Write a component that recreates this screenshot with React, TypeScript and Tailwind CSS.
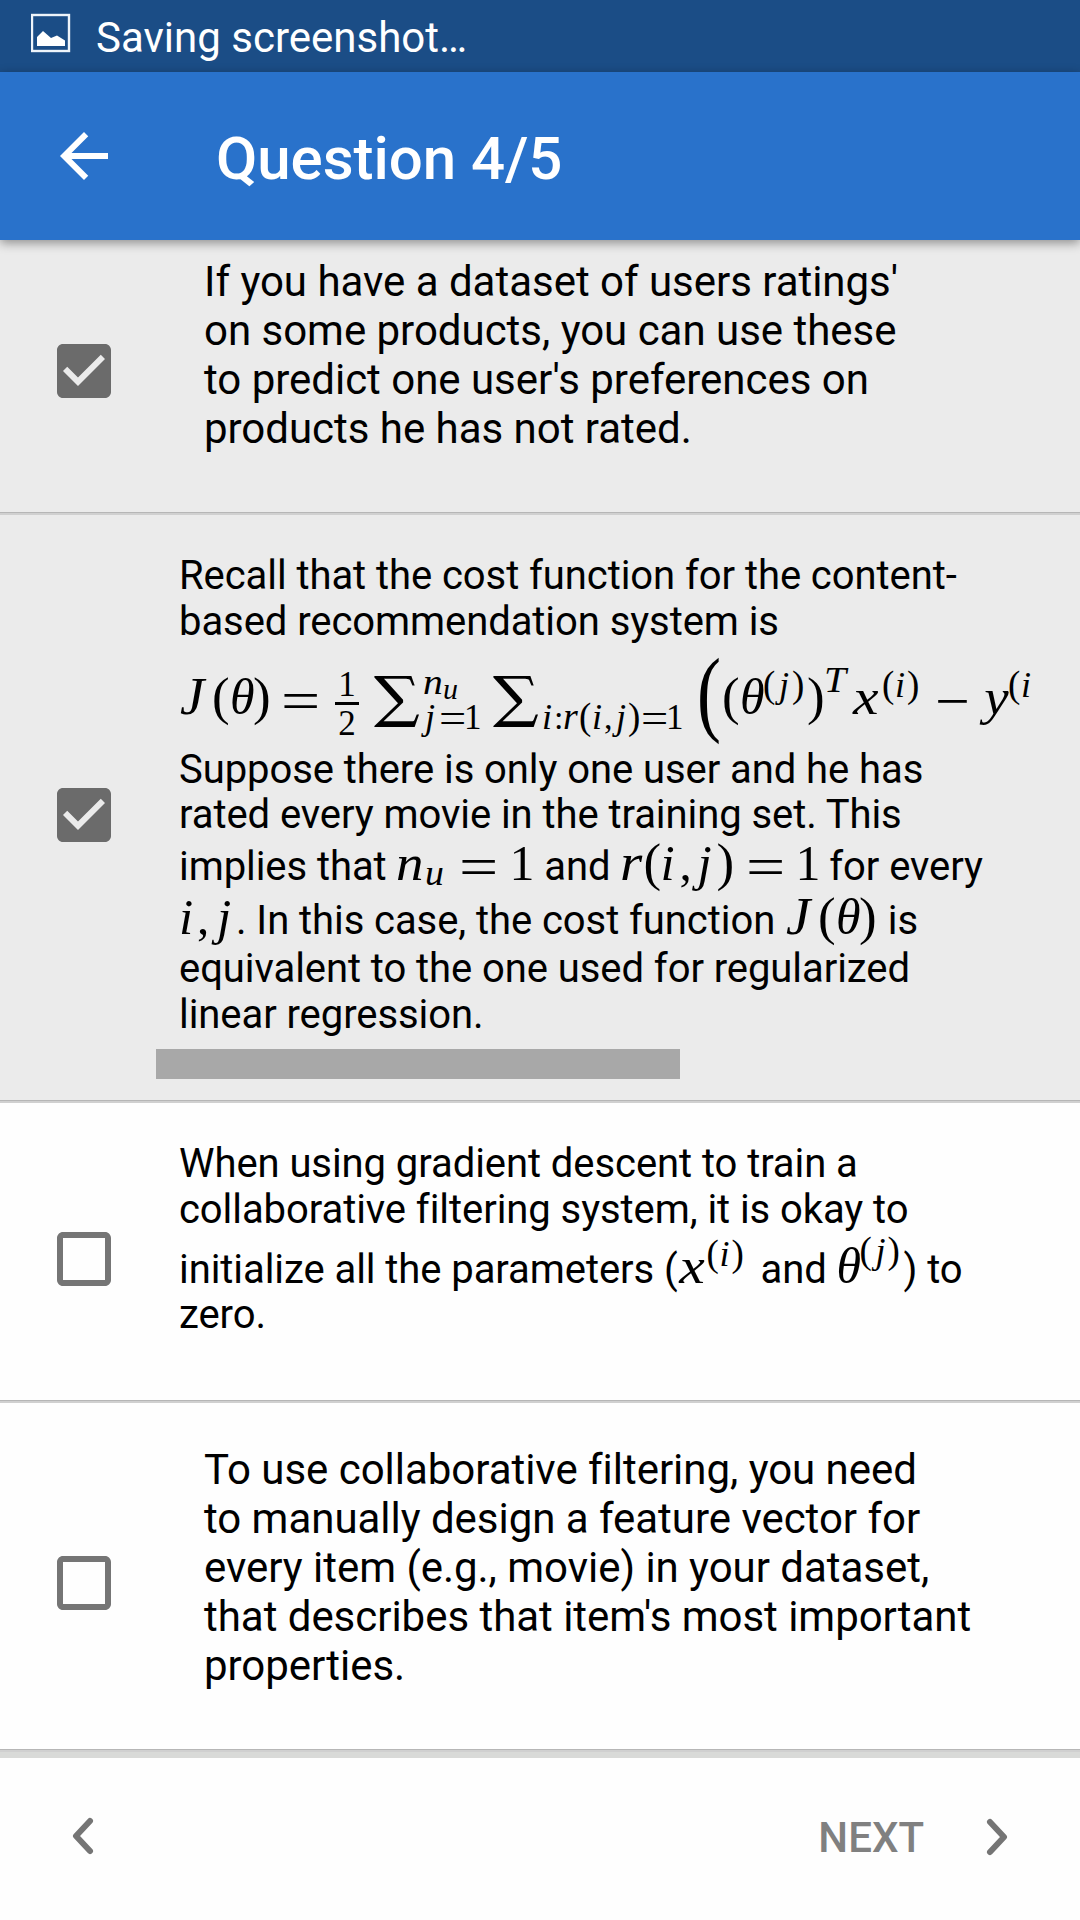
import type { ReactNode } from "react";

const BOX_OUTLINE =
  "M19 5v14H5V5h14m0-2H5c-1.1 0-2 .9-2 2v14c0 1.1.9 2 2 2h14c1.1 0 2-.9 2-2V5c0-1.1-.9-2-2-2z";
const BOX_CHECKED =
  "M19 3H5c-1.11 0-2 .9-2 2v14c0 1.1.89 2 2 2h14c1.11 0 2-.9 2-2V5c0-1.1-.89-2-2-2zm-9 14l-5-5 1.41-1.41L10 14.17l7.59-7.59L19 8l-9 9z";

function Checkbox({ checked, className }: { checked?: boolean; className: string }) {
  return (
    <svg
      viewBox="0 0 24 24"
      className={`ml-12 size-[72px] shrink-0 ${checked ? "fill-[#6b6b6b]" : "fill-[#757575]"} ${className}`}
    >
      <path d={checked ? BOX_CHECKED : BOX_OUTLINE} />
    </svg>
  );
}

function Divider() {
  return <div className="h-[3px] shrink-0 border-t border-[#b6b6b6] bg-[#d0d0d0]" />;
}

function Line({ className = "", children }: { className?: string; children: ReactNode }) {
  return <div className={`h-[46px] whitespace-nowrap leading-[46px] ${className}`}>{children}</div>;
}

/* One math symbol: a box of set width on the text's baseline. */
function M({ c, i, children }: { c: string; i?: boolean; children: ReactNode }) {
  return (
    <span
      className={`inline-block origin-left font-['Liberation_Serif',serif] leading-[0] tracking-normal ${i ? "italic" : ""} ${c}`}
    >
      {children}
    </span>
  );
}

function Sum() {
  return (
    <span className="inline-block w-[50px] origin-left scale-x-[1.12] align-[-1px] font-['DejaVu_Math_TeX_Gyre','Liberation_Serif',serif] text-[49px] leading-[0]">
      ∑
    </span>
  );
}

function CostFormula() {
  return (
    <Line className="mt-[33px]">
      <M i c="w-[33px] pl-px scale-x-105 text-[52px]">J</M>
      <M c="w-[18px] text-[53px]">(</M>
      <M i c="w-[23px] text-[50px]">θ</M>
      <M c="w-[28px] text-[53px]">)</M>
      <M c="w-[54px] scale-x-[1.2] align-[-6px] text-[58px]">=</M>
      <span className="-mt-[11px] inline-flex w-[24px] flex-col items-center align-top font-['Liberation_Serif',serif] text-[35px] leading-[35px]">
        <span>1</span>
        <span className="h-[3px] w-full bg-black" />
        <span className="mt-px">2</span>
      </span>
      <span className="inline-block w-[11px]" />
      <Sum />
      <M i c="ml-[3px] w-[20px] scale-x-110 align-[20px] text-[36px]">n</M>
      <M i c="w-[14px] align-[15px] text-[30px]">u</M>
      <M i c="-ml-[34px] w-[16px] pl-[2px] align-[-15px] text-[36px]">j</M>
      <M c="w-[25px] scale-x-[1.15] align-[-18px] text-[42px]">=</M>
      <M c="w-[25px] align-[-15px] text-[35px]">1</M>
      <Sum />
      <M i c="ml-[3px] w-[12px] align-[-15px] text-[36px]">i</M>
      <M c="w-[9px] align-[-15px] text-[34px]">:</M>
      <M i c="w-[16px] align-[-15px] text-[38px]">r</M>
      <M c="w-[13px] align-[-15px] text-[37px]">(</M>
      <M i c="w-[12px] align-[-15px] text-[36px]">i</M>
      <M c="w-[10px] align-[-15px] text-[34px]">,</M>
      <M i c="w-[14px] pl-[2px] align-[-15px] text-[36px]">j</M>
      <M c="w-[13px] align-[-15px] text-[37px]">)</M>
      <M c="w-[25px] scale-x-[1.15] align-[-18px] text-[42px]">=</M>
      <M c="w-[31px] align-[-15px] text-[35px]">1</M>
      <M c="w-[25px] scale-x-75 align-[-10px] text-[96px]">(</M>
      <M c="w-[18px] text-[53px]">(</M>
      <M i c="w-[23px] text-[50px]">θ</M>
      <M c="w-[14px] align-[17px] text-[37px]">(</M>
      <M i c="w-[15px] pl-[2px] align-[17px] text-[36px]">j</M>
      <M c="w-[15px] align-[17px] text-[37px]">)</M>
      <M c="w-[17px] text-[53px]">)</M>
      <M i c="w-[29px] scale-x-110 align-[22px] text-[36px]">T</M>
      <M i c="w-[29px] scale-x-[1.15] text-[50px]">x</M>
      <M c="w-[13px] align-[17px] text-[37px]">(</M>
      <M i c="w-[12px] align-[17px] text-[36px]">i</M>
      <M c="w-[28px] align-[17px] text-[37px]">)</M>
      <M c="w-[47px] scale-x-110 align-[-6px] text-[56px]">−</M>
      <M i c="w-[26px] scale-x-110 pl-[2px] text-[50px]">y</M>
      <M c="w-[13px] align-[17px] text-[37px]">(</M>
      <M i c="w-[12px] align-[17px] text-[36px]">i</M>
    </Line>
  );
}

export default function App() {
  return (
    <div className="flex h-[1920px] w-[1080px] flex-col overflow-hidden bg-[#fefefe] font-[Roboto,sans-serif] text-black">
      <div className="flex h-[72px] shrink-0 items-center bg-[#1b4d86] text-white">
        <svg viewBox="0 0 40 40" className="ml-[31px] mt-[-6px] size-10">
          <rect x="1" y="2" width="37" height="36" fill="none" stroke="#eef4fa" strokeWidth="2.4" />
          <path d="M6 33v-9l6-6 8 7 6-2.500 8 5v5.500z" fill="#fff" />
        </svg>
        <span className="ml-[25px] mt-[3px] text-[42px] leading-[48px]">Saving screenshot…</span>
      </div>

      <header className="relative z-10 flex h-[168px] shrink-0 items-center bg-[#2972cb] text-white shadow-[0_3px_10px_rgba(0,0,0,0.4)]">
        <svg viewBox="0 0 24 24" className="ml-12 size-[72px] fill-white">
          <path d="M20 11H7.830l5.590-5.590L12 4l-8 8 8 8 1.410-1.410L7.830 13H20v-2z" />
        </svg>
        <h1 className="ml-24 mt-[5px] text-[60px] font-medium leading-[70px] tracking-[-0.05px]">Question 4/5</h1>
      </header>

      <main className="flex shrink-0 flex-col">
        <section className="flex h-[272px] bg-[#ebebeb]">
          <Checkbox checked className="mt-[95px]" />
          <p className="ml-[84px] mt-[17px] whitespace-pre text-[42px] leading-[49px] tracking-[-0.02px]">
            {"If you have a dataset of users ratings'\non some products, you can use these\nto predict one user's preferences on\nproducts he has not rated."}
          </p>
        </section>
        <Divider />

        <section className="flex h-[585px] bg-[#ebebeb]">
          <Checkbox checked className="mt-[264px]" />
          <div className="ml-[36px] pt-[38px]">
            <div className="ml-[23px] h-[485px] text-[40px] tracking-[-0.07px]">
              <Line>Recall that the cost function for the content-</Line>
              <Line>based recommendation system is</Line>
              <CostFormula />
              <Line className="mt-[23px]">Suppose there is only one user and he has</Line>
              <Line className="-mt-px">rated every movie in the training set. This</Line>
              <Line className="mt-[6px]">
                implies that <M i c="w-[29px] scale-x-110 text-[50px]">n</M>
                <M i c="w-[34px] scale-x-105 align-[-5px] text-[36px]">u</M>
                <M c="w-[50px] scale-x-[1.2] align-[-6px] text-[58px]">=</M>
                <M c="w-[25px] text-[50px]">1</M> and{" "}
                <M i c="w-[23px] scale-x-110 text-[52px]">r</M>
                <M c="w-[17px] text-[53px]">(</M>
                <M i c="w-[19px] text-[51px]">i</M>
                <M c="w-[18px] text-[49px]">,</M>
                <M i c="w-[19px] text-[51px]">j</M>
                <M c="w-[30px] text-[53px]">)</M>
                <M c="w-[49px] scale-x-[1.2] align-[-6px] text-[58px]">=</M>
                <M c="w-[24px] text-[50px]">1</M> for every
              </Line>
              <Line className="mt-[8px]">
                <M i c="w-[18px] text-[51px]">i</M>
                <M c="w-[20px] text-[49px]">,</M>
                <M i c="w-[19px] text-[51px]">j</M>. In this case, the cost function{" "}
                <M i c="w-[33px] pl-px scale-x-105 text-[52px]">J</M>
                <M c="w-[18px] text-[53px]">(</M>
                <M i c="w-[23px] text-[50px]">θ</M>
                <M c="w-[19px] text-[53px]">)</M> is
              </Line>
              <Line className="mt-[2px]">equivalent to the one used for regularized</Line>
              <Line>linear regression.</Line>
            </div>
            <div className="mt-[11px] h-[30px] w-[524px] bg-[#a8a8a8]" />
          </div>
        </section>
        <Divider />

        <section className="flex h-[297px]">
          <Checkbox className="mt-[120px]" />
          <div className="ml-[59px] pt-[38px] text-[40px] tracking-[-0.07px]">
            <Line>When using gradient descent to train a</Line>
            <Line>collaborative filtering system, it is okay to</Line>
            <Line className="mt-[14px]">
              initialize all the parameters (<M i c="w-[29px] pl-px scale-x-[1.15] text-[50px]">x</M>
              <M c="w-[13px] align-[17px] text-[37px]">(</M>
              <M i c="w-[12px] align-[17px] text-[36px]">i</M>
              <M c="w-[19px] align-[17px] text-[37px]">)</M> and{" "}
              <M i c="w-[23px] text-[50px]">θ</M>
              <M c="w-[14px] align-[20px] text-[37px]">(</M>
              <M i c="w-[14px] pl-[2px] align-[20px] text-[36px]">j</M>
              <M c="w-[16px] align-[20px] text-[37px]">)</M>) to
            </Line>
            <Line className="-mt-px">zero.</Line>
          </div>
        </section>
        <Divider />

        <section className="flex h-[346px]">
          <Checkbox className="mt-[144px]" />
          <p className="ml-[84px] mt-[42px] whitespace-pre text-[42px] leading-[49px] tracking-[-0.03px]">
            {"To use collaborative filtering, you need\nto manually design a feature vector for\nevery item (e.g., movie) in your dataset,\nthat describes that item's most important\nproperties."}
          </p>
        </section>
        <Divider />
      </main>

      <div className="h-[6px] shrink-0 bg-[#d9dad8]" />

      <footer className="flex h-[162px] shrink-0 items-center text-[#808080]">
        <svg viewBox="0 0 24 40" className="ml-[71px] mt-[-6px] h-10 w-6">
          <path d="M19 5L5 20l14 15" fill="none" stroke="#757575" strokeWidth="6" strokeLinecap="round" strokeLinejoin="round" />
        </svg>
        <span className="ml-auto mt-[-2px] text-[42px] font-medium leading-[50px]">NEXT</span>
        <svg viewBox="0 0 24 40" className="ml-[61px] mr-[71px] mt-[-5px] h-10 w-6">
          <path d="M5 5l14 15L5 35" fill="none" stroke="#757575" strokeWidth="6" strokeLinecap="round" strokeLinejoin="round" />
        </svg>
      </footer>
    </div>
  );
}
